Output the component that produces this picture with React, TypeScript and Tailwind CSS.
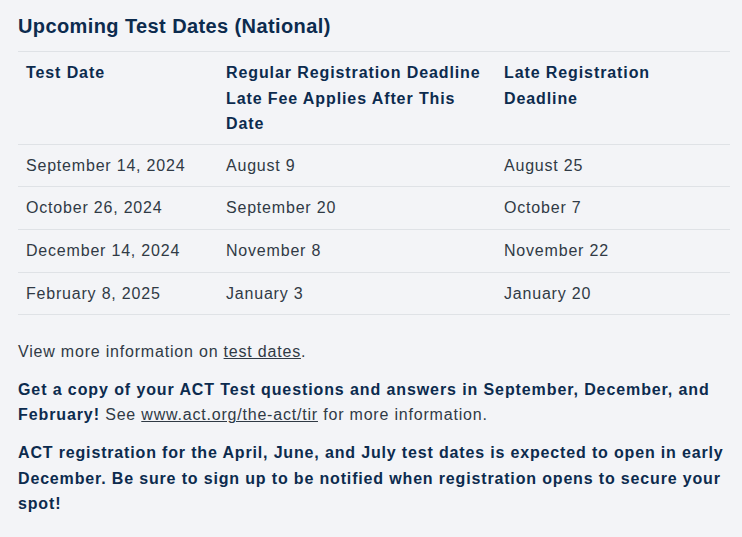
export default function App() {
  const rows = [
    ["September 14, 2024", "August 9", "August 25"],
    ["October 26, 2024", "September 20", "October 7"],
    ["December 14, 2024", "November 8", "November 22"],
    ["February 8, 2025", "January 3", "January 20"],
  ];

  return (
    <div className="min-h-[537px] bg-[#f3f4f7] px-[18px] pt-[12px] pb-6 font-['Liberation_Sans',Arial,sans-serif] text-[16px] leading-[1.6] tracking-[0.8px] text-[#303a45]">
      <h2 className="mb-[11px] text-[20px] font-bold leading-[28px] tracking-[0.4px] text-[#0c2b4e]">
        Upcoming Test Dates (National)
      </h2>
      <table className="w-[712px] table-fixed border-collapse">
        <colgroup>
          <col className="w-[200px]" />
          <col className="w-[278px]" />
          <col className="w-[234px]" />
        </colgroup>
        <thead>
          <tr className="border-y border-[#dfe2e6] text-left align-top font-bold tracking-[0.9px] text-[#0c2b4e]">
            <th className="px-2 pt-2 pb-[7px]">Test Date</th>
            <th className="px-2 pt-2 pb-[7px]">
              Regular Registration Deadline Late Fee Applies After This Date
            </th>
            <th className="px-2 pt-2 pb-[7px]">Late Registration Deadline</th>
          </tr>
        </thead>
        <tbody>
          {rows.map((r) => (
            <tr key={r[0]} className="border-b border-[#dfe2e6]">
              {r.map((c) => (
                <td key={c} className="p-2">
                  {c}
                </td>
              ))}
            </tr>
          ))}
        </tbody>
      </table>
      <p className="mt-[24px]">
        View more information on <a className="underline">test dates</a>.
      </p>
      <p className="mt-[12px]">
        <strong className="tracking-[0.9px] text-[#0c2b4e]">
          Get a copy of your ACT Test questions and answers in September,
          December, and February!
        </strong>{" "}
        See <a className="underline">www.act.org/the-act/tir</a> for more
        information.
      </p>
      <p className="mt-[12px] font-bold tracking-[0.84px] text-[#0c2b4e]">
        ACT registration for the April, June, and July test dates is expected
        to open in early December. Be sure to sign up to be notified when
        registration opens to secure your spot!
      </p>
    </div>
  );
}
